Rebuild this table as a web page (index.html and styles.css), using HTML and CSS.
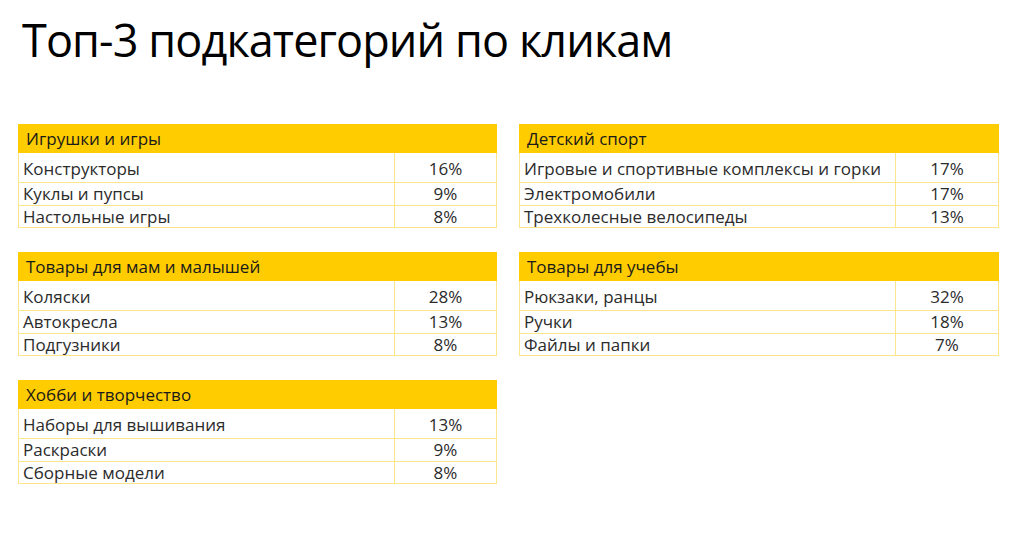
FILE: index.html
```html
<!DOCTYPE html>
<html lang="ru">
<head>
<meta charset="utf-8">
<title>Топ-3 подкатегорий по кликам</title>
<link rel="stylesheet" href="styles.css">
</head>
<body>
<div class="slide">
  <h1 class="title">Топ-3 подкатегорий по кликам</h1>
  <div class="grid">
    <div class="col">
      <table class="tbl">
        <colgroup><col class="c-name"><col class="c-val"></colgroup>
        <tr class="head"><th colspan="2">Игрушки и игры</th></tr>
        <tr class="r1"><td class="name">Конструкторы</td><td class="val">16%</td></tr>
        <tr class="r2"><td class="name">Куклы и пупсы</td><td class="val">9%</td></tr>
        <tr class="r3"><td class="name">Настольные игры</td><td class="val">8%</td></tr>
      </table>
      <table class="tbl">
        <colgroup><col class="c-name"><col class="c-val"></colgroup>
        <tr class="head"><th colspan="2">Товары для мам и малышей</th></tr>
        <tr class="r1"><td class="name">Коляски</td><td class="val">28%</td></tr>
        <tr class="r2"><td class="name">Автокресла</td><td class="val">13%</td></tr>
        <tr class="r3"><td class="name">Подгузники</td><td class="val">8%</td></tr>
      </table>
      <table class="tbl">
        <colgroup><col class="c-name"><col class="c-val"></colgroup>
        <tr class="head"><th colspan="2">Хобби и творчество</th></tr>
        <tr class="r1"><td class="name">Наборы для вышивания</td><td class="val">13%</td></tr>
        <tr class="r2"><td class="name">Раскраски</td><td class="val">9%</td></tr>
        <tr class="r3"><td class="name">Сборные модели</td><td class="val">8%</td></tr>
      </table>
    </div>
    <div class="col">
      <table class="tbl">
        <colgroup><col class="c-name"><col class="c-val"></colgroup>
        <tr class="head"><th colspan="2">Детский спорт</th></tr>
        <tr class="r1"><td class="name">Игровые и спортивные комплексы и горки</td><td class="val">17%</td></tr>
        <tr class="r2"><td class="name">Электромобили</td><td class="val">17%</td></tr>
        <tr class="r3"><td class="name">Трехколесные велосипеды</td><td class="val">13%</td></tr>
      </table>
      <table class="tbl">
        <colgroup><col class="c-name"><col class="c-val"></colgroup>
        <tr class="head"><th colspan="2">Товары для учебы</th></tr>
        <tr class="r1"><td class="name">Рюкзаки, ранцы</td><td class="val">32%</td></tr>
        <tr class="r2"><td class="name">Ручки</td><td class="val">18%</td></tr>
        <tr class="r3"><td class="name">Файлы и папки</td><td class="val">7%</td></tr>
      </table>
    </div>
  </div>
</div>
</body>
</html>
```
FILE: styles.css
```css
html, body {
  margin: 0;
  padding: 0;
  background: #ffffff;
}
.slide {
  width: 1024px;
  height: 536px;
  box-sizing: border-box;
  padding: 8px 25px 0 18px;
  font-family: "Open Sans", "Noto Sans", sans-serif;
  color: #2b2b2b;
}
.title {
  margin: 0 0 0 4px;
  font-weight: 400;
  font-size: 45px;
  line-height: 64px;
  height: 64px;
  color: #000;
  letter-spacing: -0.9px;
  white-space: nowrap;
}
.grid {
  margin-top: 52px;
  display: grid;
  grid-template-columns: 479px 480px;
  column-gap: 22px;
  align-items: start;
}
.col {
  display: flex;
  flex-direction: column;
  gap: 24px;
}
.tbl {
  width: 100%;
  border-collapse: collapse;
  table-layout: fixed;
  font-size: 17px;
}
.tbl .c-name {
  width: 376px;
}
.tbl th,
.tbl td {
  padding: 0 0 0 4px;
  border: 1px solid #fde58c;
  font-weight: 400;
  text-align: left;
  white-space: nowrap;
}
.tbl .head th {
  background: #ffcc00;
  color: #1a1a1a;
  height: 27px;
  padding-left: 7px;
  border-color: #ffcc00;
}
.tbl .val {
  text-align: center;
  padding: 0;
}
.tbl .r1 td { height: 28px; padding-top: 1px; }
.tbl .r2 td { height: 22px; line-height: 20px; }
.tbl .r3 td { height: 21px; line-height: 20px; }
```
